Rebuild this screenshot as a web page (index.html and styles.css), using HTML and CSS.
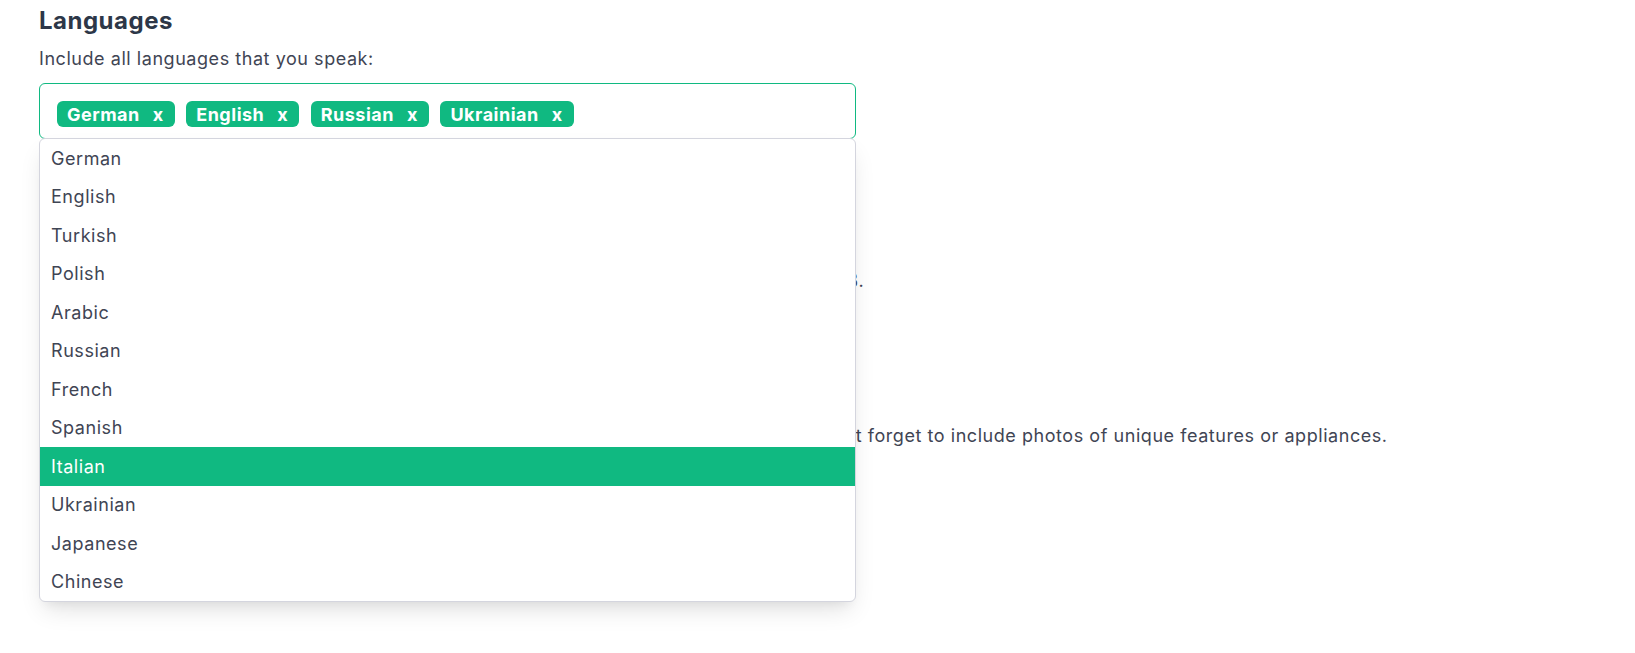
FILE: index.html
```html
<!DOCTYPE html>
<html lang="en">
<head>
<meta charset="utf-8">
<title>Languages</title>
<link rel="stylesheet" href="styles.css">
</head>
<body>
<main class="page">
  <section class="section first">
    <h2 class="title">Languages</h2>
    <p class="hint">Include all languages that you speak:</p>
    <div class="picker">
      <div class="tags">
        <span class="tag">German<span class="tag-x">x</span></span>
        <span class="tag">English<span class="tag-x">x</span></span>
        <span class="tag">Russian<span class="tag-x">x</span></span>
        <span class="tag">Ukrainian<span class="tag-x">x</span></span>
      </div>
      <ul class="menu">
        <li class="opt">German</li>
        <li class="opt">English</li>
        <li class="opt">Turkish</li>
        <li class="opt">Polish</li>
        <li class="opt">Arabic</li>
        <li class="opt">Russian</li>
        <li class="opt">French</li>
        <li class="opt">Spanish</li>
        <li class="opt active">Italian</li>
        <li class="opt">Ukrainian</li>
        <li class="opt">Japanese</li>
        <li class="opt">Chinese</li>
      </ul>
    </div>
  </section>
  <section class="section">
    <h2 class="title">Profile photo</h2>
    <p class="hint">Upload a photo of yourself. Permitted formats are JPG and PNG, maximum file size is 5 MB.</p>
  </section>
  <section class="section">
    <h2 class="title">Photos</h2>
    <p class="hint">Show guests what your place looks like: add photos of every room and the best view. Don't forget to include photos of unique features or appliances.</p>
  </section>
</main>
</body>
</html>
```
FILE: styles.css
```css
* { box-sizing: border-box; }
html, body { margin: 0; padding: 0; background: #ffffff; }
body {
  min-height: 100vh;
  font-family: Inter, "Noto Sans", "Liberation Sans", sans-serif;
  color: #374151;
}
.page {
  padding: 5px 0 0 39px;
  width: 856px;
  min-height: 653px;
}
.section { margin-top: 88px; }
.section.first { margin-top: 0; }
.title {
  margin: 0;
  font-size: 24px;
  line-height: 32px;
  font-weight: 700;
  letter-spacing: 0.5px;
  color: #2d3748;
}
.hint {
  margin: 8px 0 0;
  font-size: 18px;
  line-height: 27px;
  letter-spacing: 0.55px;
  color: #3f4554;
  white-space: nowrap;
}
.picker {
  position: relative;
  margin-top: 11px;
  border: 1px solid #10b981;
  border-radius: 6px;
  padding: 17px 16px 11px 17px;
}
.tags {
  display: flex;
  gap: 11.5px;
}
.tag {
  display: inline-flex;
  align-items: center;
  height: 26px;
  padding: 0 11px 0 10px;
  background: #10b981;
  color: #ffffff;
  border-radius: 6px;
  font-size: 18px;
  font-weight: 700;
  letter-spacing: 0.5px;
}
.tag-x { margin-left: 13px; }
.menu {
  position: absolute;
  top: 100%;
  left: -1px;
  right: -1px;
  margin: 0;
  padding: 0;
  list-style: none;
  background: #ffffff;
  border: 1px solid #d4d5de;
  border-radius: 6px;
  box-shadow: 0 12px 25px -5px rgba(0,0,0,0.12), 0 8px 10px -6px rgba(0,0,0,0.06);
  z-index: 10;
}
.opt {
  height: 38.5px;
  padding: 5.75px 11px;
  font-size: 18px;
  line-height: 27px;
  letter-spacing: 0.55px;
  color: #3f4554;
}
.opt.active {
  background: #10b981;
  color: #ffffff;
}
```
